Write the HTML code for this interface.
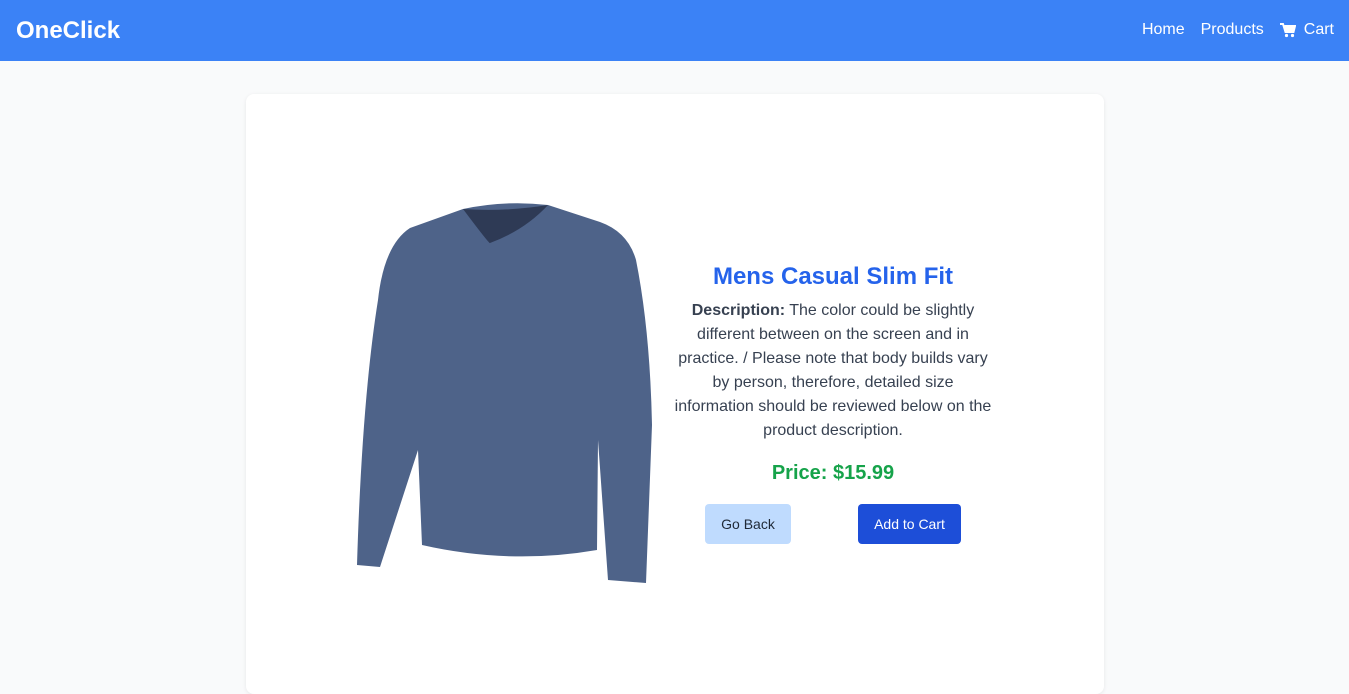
<!DOCTYPE html>
<html><head><meta charset="utf-8"><style>
body{margin:0;background:#f9fafb;font-family:"Liberation Sans",sans-serif;width:1349px;height:653px;overflow:hidden;position:relative}
.nav{height:61px;background:#3b82f6;color:#fff;position:relative}
.logo{position:absolute;left:16px;top:17px;font-size:24px;font-weight:bold}
.links{position:absolute;right:15px;top:21px;font-size:16px;display:flex;gap:16px;align-items:center}
.card{position:absolute;left:246px;top:94px;width:858px;height:600px;background:#fff;border-radius:8px;box-shadow:0 1px 4px rgba(0,0,0,.08)}
h1{position:absolute;left:673px;width:320px;top:263px;margin:0;text-align:center;color:#2563eb;font-size:24px;line-height:28px}
.desc{position:absolute;left:673px;width:320px;top:299px;text-align:center;color:#374151;font-size:16px;line-height:24px}
.price{position:absolute;left:673px;width:320px;top:462px;text-align:center;color:#16a34a;font-size:20px;font-weight:bold}
.btn{position:absolute;top:504px;height:40px;border-radius:4px;font-size:14px;display:flex;align-items:center;justify-content:center}
</style></head><body>
<div class="nav"><div class="logo">OneClick</div>
<div class="links"><span>Home</span><span>Products</span><span style="display:flex;align-items:center;gap:8px"><svg width="16" height="15" viewBox="0 0 16 15"><path d="M0 1h3l2.5 8h8L15 3H4.5" fill="none" stroke="#fff" stroke-width="2"/><path d="M4 3h11l-1.8 6H6z" fill="#fff"/><circle cx="6.5" cy="12.5" r="1.6" fill="#fff"/><circle cx="12.5" cy="12.5" r="1.6" fill="#fff"/></svg>Cart</span></div></div>
<div class="card"></div>
<svg style="position:absolute;left:0;top:0" width="1349" height="653">
<path d="M463 209 Q505 200 548 205 L600 222 Q628 232 636 260 Q650 330 652 425 L646 583 L608 580 L598 440 L597 550 Q510 565 422 545 L418 450 L380 567 L357 565 Q362 400 378 300 Q384 245 410 228 Z" fill="#4e6389"/>
<path d="M463 209 Q490 245 490 243 Q525 230 548 205 Q505 212 463 209Z" fill="#2e3a55"/>
</svg>
<h1>Mens Casual Slim Fit</h1>
<div class="desc"><b>Description:</b> The color could be slightly different between on the screen and in practice. / Please note that body builds vary by person, therefore, detailed size information should be reviewed below on the product description.</div>
<div class="price">Price: $15.99</div>
<div class="btn" style="left:705px;width:86px;background:#bfdbfe;color:#1f2937">Go Back</div>
<div class="btn" style="left:858px;width:103px;background:#1d4ed8;color:#fff">Add to Cart</div>
</body></html>
